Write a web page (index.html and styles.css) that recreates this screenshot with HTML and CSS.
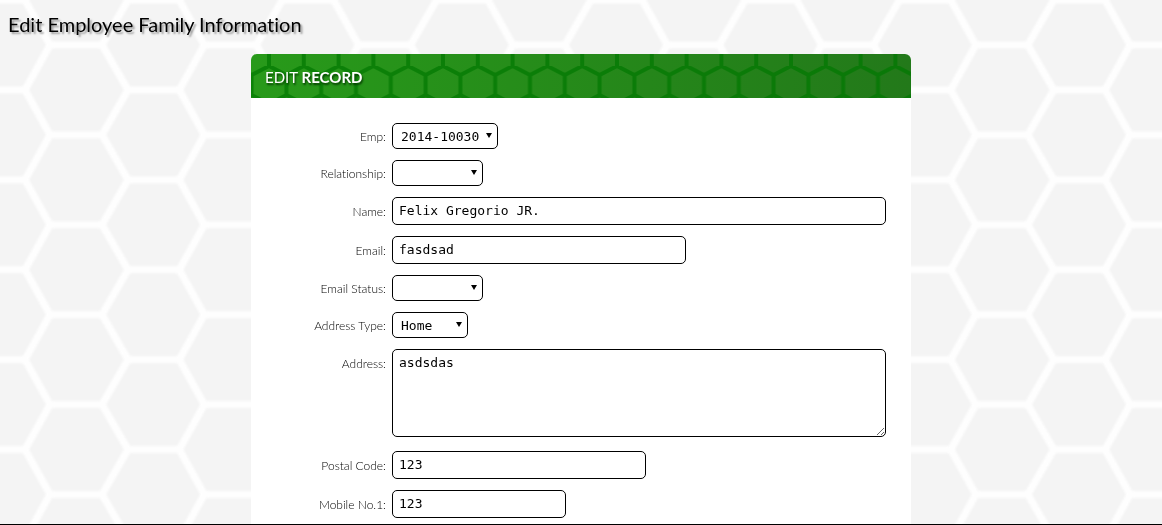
FILE: index.html
```
<!DOCTYPE html>
<html lang="en">
<head>
<meta charset="utf-8">
<title>Edit Employee Family Information</title>
<link rel="stylesheet" href="styles.css">
</head>
<body>
<svg class="backdrop" aria-hidden="true">
  <defs>
    <filter id="soft"><feGaussianBlur stdDeviation="1"/></filter>
    <pattern id="comb" x="-1" width="154.3" height="89.9" patternUnits="userSpaceOnUse">
      <path d="M51 45H103L129 90H180L205 135M51 45L26 90H-26L-51 45M51 45L26 0H-26L-51 45M103 45L129 0H180L205 45H257M26 0L51 -45M129 0L103 -45M26 90L51 135M129 90L103 135" fill="none" stroke="#fefefe" stroke-width="7" filter="url(#soft)"/>
    </pattern>
  </defs>
  <rect width="100%" height="100%" fill="url(#comb)"/>
</svg>
<h1 class="page-title">Edit Employee Family Information</h1>
<main class="panel">
  <header class="panel-head">
    <svg class="head-art" aria-hidden="true">
      <defs>
        <pattern id="cells" x="18" y="12" width="34.8" height="58" patternUnits="userSpaceOnUse">
          <path d="M0 -20V0L17.4 9L34.8 0V-20M34.8 58V38M17.4 9V29L0 38V58M17.4 29L34.8 38" fill="none" stroke="#007800" stroke-opacity=".7" stroke-width="4"/>
        </pattern>
      </defs>
      <rect width="100%" height="100%" fill="url(#cells)"/>
    </svg>
    <h2 class="panel-title">EDIT <strong>RECORD</strong></h2>
  </header>
  <form class="form">
    <div class="row">
      <label class="label" for="emp">Emp:</label>
      <span class="pick pick-emp"><select class="control select" id="emp"><option>2014-10030</option></select></span>
    </div>
    <div class="row">
      <label class="label" for="rel">Relationship:</label>
      <span class="pick pick-blank"><select class="control select" id="rel"><option></option></select></span>
    </div>
    <div class="row">
      <label class="label" for="name">Name:</label>
      <input class="control text" id="name" type="text" value="Felix Gregorio JR.">
    </div>
    <div class="row">
      <label class="label" for="email">Email:</label>
      <input class="control text text-email" id="email" type="text" value="fasdsad">
    </div>
    <div class="row">
      <label class="label" for="status">Email Status:</label>
      <span class="pick pick-blank"><select class="control select" id="status"><option></option></select></span>
    </div>
    <div class="row">
      <label class="label" for="type">Address Type:</label>
      <span class="pick pick-type"><select class="control select" id="type"><option>Home</option></select></span>
    </div>
    <div class="row row-area">
      <label class="label" for="address">Address:</label>
      <textarea class="control area" id="address">asdsdas</textarea>
    </div>
    <div class="row">
      <label class="label" for="postal">Postal Code:</label>
      <input class="control text text-postal" id="postal" type="text" value="123">
    </div>
    <div class="row">
      <label class="label" for="mobile">Mobile No.1:</label>
      <input class="control text text-mobile" id="mobile" type="text" value="123">
    </div>
  </form>
</main>
<footer class="rule"></footer>
</body>
</html>
```
FILE: styles.css
```
* { box-sizing: border-box; }
body {
  margin: 0;
  min-height: 100vh;
  display: flex;
  flex-direction: column;
  background: #f4f4f4;
  color: #000;
  font-family: Lato, "Open Sans", sans-serif;
  font-variant-ligatures: none;
}
.backdrop {
  position: fixed;
  inset: 0;
  width: 100%;
  height: 100%;
  z-index: -1;
}
.page-title {
  margin: 0;
  padding: 9px 8px 15px;
  font-size: 20px;
  font-weight: 400;
  line-height: 30px;
  text-shadow: 2px 2px 2px #999;
}
.panel {
  width: 100%;
  max-width: 660px;
  margin: 0 auto;
  flex: 1;
  background: #fff;
  border-radius: 6px 6px 0 0;
}
.panel-head {
  position: relative;
  display: flex;
  align-items: center;
  height: 44px;
  padding: 2px 14px 0;
  overflow: hidden;
  border-radius: 6px 6px 0 0;
  background: linear-gradient(to right, #289a1a, #23791a);
}
.head-art {
  position: absolute;
  inset: 0;
  width: 100%;
  height: 100%;
}
.panel-title {
  position: relative;
  margin: 0;
  color: #fff;
  font-size: 15px;
  font-weight: 400;
  line-height: 20px;
  text-shadow: 1px 2px 2px #053c00;
}
.panel-title strong { font-weight: 700; }
.form {
  display: flex;
  flex-direction: column;
  gap: 11px;
  padding: 25px 25px 6px;
}
.row {
  display: grid;
  grid-template-columns: 110px minmax(0, 1fr);
  column-gap: 6px;
  align-items: center;
}
.row-area { align-items: start; margin-bottom: 3px; }
.label {
  padding-top: 2px;
  text-align: right;
  font-size: 12px;
  font-weight: 300;
  line-height: 20px;
}
.row-area .label { padding-top: 5px; }
.control {
  width: 100%;
  margin: 0;
  border: 1px solid #000;
  border-radius: 5px;
  background: #fff;
  color: #000;
  font: 13px/16px "DejaVu Sans Mono", monospace;
}
.text { height: 28px; padding: 0 6px 2px; }
.text-email { max-width: 294px; }
.text-postal { max-width: 254px; }
.text-mobile { max-width: 174px; }
.area { display: block; height: 88px; padding: 5px 6px; resize: both; }
.pick { position: relative; display: block; }
.pick-emp { width: 106px; }
.pick-blank { width: 91px; }
.pick-type { width: 76px; }
.pick::after {
  content: "";
  position: absolute;
  right: 6px;
  top: 10px;
  border: 3px solid transparent;
  border-top: 5px solid #000;
  border-bottom: 0;
  pointer-events: none;
}
.select { display: block; height: 26px; padding: 2px 8px 0; appearance: none; }
.rule { height: 1px; background: #000; }
```
